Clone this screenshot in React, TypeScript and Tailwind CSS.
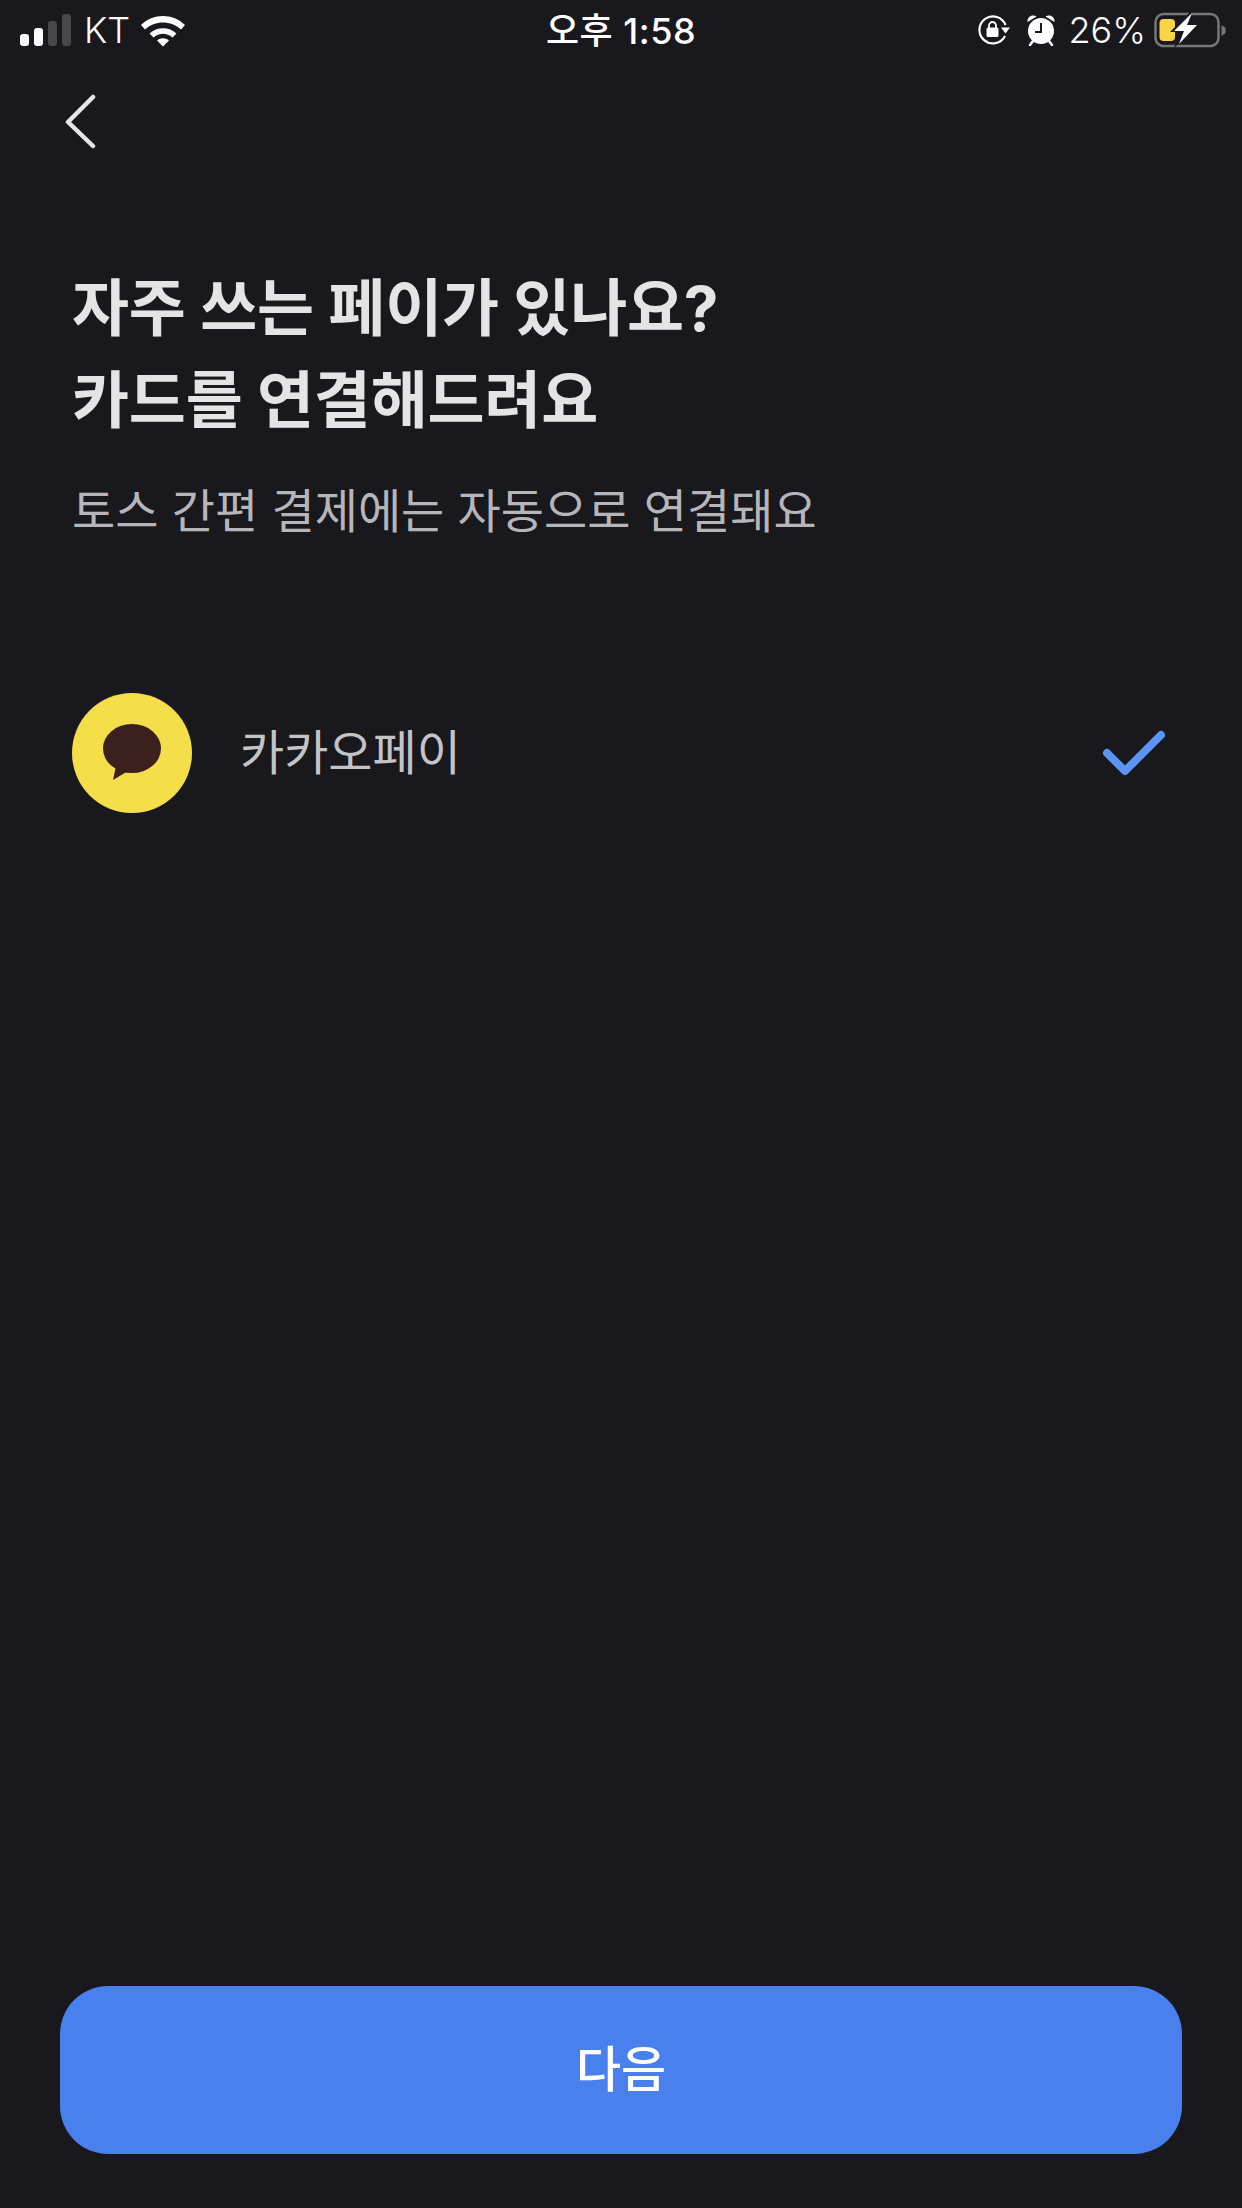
const font = "font-['Inter','Noto_Sans_CJK_KR',sans-serif]";

function SignalBars() {
  return (
    <svg width="52" height="33" viewBox="0 0 52 33" className="shrink-0">
      <rect x="0" y="20" width="9" height="12" rx="3" fill="#fff" />
      <rect x="14" y="14" width="9" height="18" rx="3" fill="#fff" />
      <rect x="28" y="7" width="9" height="25" rx="3" fill="#48484c" />
      <rect x="42" y="0" width="9" height="32" rx="3" fill="#48484c" />
    </svg>
  );
}

function Wifi() {
  return (
    <svg width="46" height="34" viewBox="0 0 46 34" className="shrink-0">
      <path d="M1 12 C13 0 33 0 45 12 L41 16.5 C31 7 15 7 5 16.5 Z" fill="#fff" />
      <path d="M9.5 20.5 C17 13.5 29 13.5 36.5 20.5 L32.5 24.5 C26.500 19.500 19.500 19.500 13.500 24.500 Z" fill="#fff" />
      <path d="M17 27.500 C20.500 24.500 25.500 24.500 29 27.500 L23 33.500 Z" fill="#fff" />
    </svg>
  );
}

function RotationLock() {
  return (
    <svg width="32" height="30" viewBox="0 0 32 30" className="shrink-0">
      <path d="M27 21 A13.500 13.500 0 1 1 27.500 10" fill="none" stroke="#fff" strokeWidth="2.200" />
      <path d="M23 12.500 H32 L27.500 18.500 Z" fill="#fff" />
      <rect x="8.500" y="12.500" width="12" height="9.500" rx="1.500" fill="#fff" />
      <path d="M11 13 V10.500 A3.500 3.500 0 0 1 18 10.500 V13" fill="none" stroke="#fff" strokeWidth="1.800" />
    </svg>
  );
}

function Alarm() {
  return (
    <svg width="28" height="32" viewBox="0 0 28 32" className="shrink-0">
      <circle cx="14" cy="17" r="13" fill="#fff" />
      <path d="M0.500 8 C0 3 5 0 9.500 2.500 Z" fill="#fff" />
      <path d="M27.500 8 C28 3 23 0 18.500 2.500 Z" fill="#fff" />
      <path d="M6 27 L3 31 M22 27 L25 31" stroke="#fff" strokeWidth="2.500" strokeLinecap="round" />
      <path d="M14 9 V18 H8" fill="none" stroke="#18181d" strokeWidth="2" />
    </svg>
  );
}

function Battery() {
  return (
    <svg width="74" height="36" viewBox="0 0 74 36" className="shrink-0">
      <rect x="1.500" y="2" width="63" height="32" rx="8" fill="none" stroke="#77777b" strokeWidth="2.500" />
      <path d="M67.500 13 L71.500 16 V21 L67.500 24 Z" fill="#77777b" />
      <rect x="5.500" y="7" width="15.500" height="22" rx="4" fill="#f8d544" />
      <path d="M38 -2 L16 20 H26 L20 36 L47 12 H36 Z" fill="#18181d" />
      <path d="M38 1 L20 19 H30 L25 32 L43 13 H33 Z" fill="#fff" />
    </svg>
  );
}

function KakaoIcon() {
  return (
    <div className="flex h-[120px] w-[120px] shrink-0 items-center justify-center rounded-full bg-[#f4df4b]">
      <svg width="60" height="58" viewBox="0 0 60 58">
        <ellipse cx="30" cy="24.500" rx="29" ry="24.500" fill="#3b201e" />
        <path d="M14 42 L11 56 L26 47 Z" fill="#3b201e" />
      </svg>
    </div>
  );
}

export default function App() {
  return (
    <div className={`flex h-[2208px] w-[1242px] flex-col bg-[#18181d] ${font}`}>
      {/* status bar */}
      <div className="grid h-[60px] grid-cols-[1fr_auto_1fr] items-center text-[36px] leading-none text-white">
        <div className="flex items-center pl-5">
          <SignalBars />
          <span className="ml-[12px] font-light">KT</span>
          <span className="ml-[10px]"><Wifi /></span>
        </div>
        <div className="pt-[2px] font-medium tracking-[0.5px]">오후 1:58</div>
        <div className="flex items-center justify-end pr-[14px]">
          <RotationLock />
          <span className="ml-[17px]"><Alarm /></span>
          <span className="ml-[14px] font-light">26%</span>
          <span className="ml-[8px]"><Battery /></span>
        </div>
      </div>

      {/* back */}
      <div className="pl-[64px] pt-[34px]">
        <svg width="34" height="56" viewBox="0 0 34 56">
          <path d="M29 3 L4 28 L29 52" fill="none" stroke="#e6e6e8" strokeWidth="4.500" strokeLinecap="round" strokeLinejoin="round" />
        </svg>
      </div>

      <div className="px-[72px] pt-[113px]">
        <h1 className="text-[62px] font-bold leading-[92px] tracking-[-0.2px] text-[#e4e4e5]">
          자주 쓰는 페이가 있나요?
          <br />
          카드를 연결해드려요
        </h1>
        <p className="mt-[34px] text-[47px] leading-[60px] text-[#b5b5ba]">
          토스 간편 결제에는 자동으로 연결돼요
        </p>
      </div>

      <div className="mt-[152px] flex items-center pl-[72px] pr-[74px]">
        <KakaoIcon />
        <span className="ml-[48px] flex-1 text-[48px] text-[#c4c4c8]">카카오페이</span>
        <svg width="66" height="50" viewBox="0 0 66 50" className="mt-[4px]">
          <path d="M5 23 L23 41 L59 5" fill="none" stroke="#5b94f5" strokeWidth="8" strokeLinecap="round" strokeLinejoin="round" />
        </svg>
      </div>

      <div className="mt-auto px-[60px] pb-[54px]">
        <button type="button" className="h-[168px] w-full rounded-[48px] bg-[#4880ee] text-[49px] font-medium text-white">
          다음
        </button>
      </div>
    </div>
  );
}
